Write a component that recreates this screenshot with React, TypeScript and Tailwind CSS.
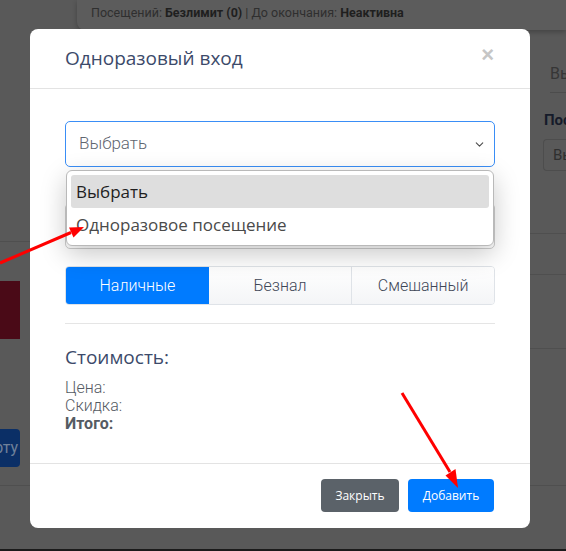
import { ChevronDown } from "lucide-react";

function Backdrop() {
  return (
    <div className="flex h-full flex-col">
      {/* top card of the page behind */}
      <div className="ml-[77px] h-[30px] rounded-bl-[8px] bg-[#5c5c5c] pl-[14px] pt-[4px] font-['Roboto',sans-serif] text-[12.5px] text-[#2f2f2f] shadow-[0_2px_5px_rgba(0,0,0,0.25)]">
        Посещений: <b className="font-bold text-[#1f1f1f]">Безлимит (0)</b> | До окончания:{" "}
        <b className="font-bold text-[#1f1f1f]">Неактивна</b>
      </div>

      <div className="flex flex-1">
        {/* left strip */}
        <div className="flex w-[30px] flex-col">
          <div className="mt-[211px] h-px bg-[#4f4f4f]" />
          <div className="mt-[39px] h-[58px] w-[20px] bg-[#4a0a17]" />
          <div className="mt-[90px] flex h-[38px] w-[20px] items-center justify-end overflow-hidden rounded-r-[4px] bg-[#0b2f66] pr-[2px] font-['Roboto',sans-serif] text-[16px] text-[#6f8099]">
            рту
          </div>
        </div>

        <div className="flex-1" />

        {/* right strip */}
        <div className="flex w-[36px] flex-col">
          <div className="ml-[20px] mt-[34px] h-[20px] overflow-hidden whitespace-nowrap font-['Roboto',sans-serif] text-[16px] leading-[20px] text-[#363636]">
            Вы
          </div>
          <div className="ml-[20px] mt-[8px] h-px bg-[#4c4c4c]" />
          <div className="ml-[14px] mt-[18px] overflow-hidden whitespace-nowrap font-['Roboto',sans-serif] text-[15px] font-bold leading-[18px] text-[#151b2a]">
            Посещ
          </div>
          <div className="ml-[13px] mt-[10px] flex h-[32px] items-center overflow-hidden whitespace-nowrap rounded-l-[4px] border border-r-0 border-[#4d4d4d] pl-[9px] font-['Roboto',sans-serif] text-[15px] text-[#2f2f2f]">
            Вы
          </div>
          <div className="mt-[62px] h-px bg-[#4f4f4f]" />
          <div className="mt-[40px] h-px bg-[#4f4f4f]" />
          <div className="mt-[73px] h-px bg-[#4f4f4f]" />
        </div>
      </div>

      <div className="h-px bg-[#4f4f4f]" />
      <div className="h-[63px]" />
      <div className="h-[2px] bg-[#1b1b1b]" />
    </div>
  );
}

function Arrows() {
  return (
    <svg
      className="pointer-events-none absolute left-0 top-0"
      width="566"
      height="551"
      viewBox="0 0 566 551"
    >
      <line x1="0" y1="263" x2="71" y2="232.5" stroke="#ff0000" strokeWidth="3" />
      <polygon points="84,227 73.5,237.5 69,227.5" fill="#ff0000" />
      <line x1="402" y1="393" x2="450" y2="472" stroke="#ff0000" strokeWidth="3" />
      <polygon points="458,488 445.5,475.5 455.5,469" fill="#ff0000" />
    </svg>
  );
}

export default function App() {
  return (
    <div className="relative h-[551px] w-[566px] overflow-hidden bg-[#595959]">
      <Backdrop />

      {/* modal */}
      <div className="absolute left-[30px] top-[29px] w-[500px] rounded-[8px] bg-white">
        <div className="flex h-[60px] items-center justify-between border-b border-[#e3e3e3] pl-[35px] pr-[36px]">
          <h5 className="font-['Open_Sans',sans-serif] text-[19px] text-[#3c4a6a]">Одноразовый вход</h5>
          <span className="-mt-[8px] font-['Liberation_Sans',sans-serif] text-[22px] font-bold leading-none text-[#c6c6c6]">
            ×
          </span>
        </div>

        <div className="px-[35px] pb-[30px] pt-[32px]">
          <div className="relative">
            <div className="flex h-[46px] items-center justify-between rounded-[5px] border border-[#3a8ef6] pl-[13px] pr-[8px] font-['Roboto',sans-serif] text-[17px] font-light text-[#5f6670]">
              Выбрать
              <ChevronDown size={13} strokeWidth={2} className="text-[#4d4d4d]" />
            </div>

            {/* field hidden under the open list */}
            <div className="mt-[36px] h-[46px] rounded-[5px] border border-[#cfcfcf]" />

            {/* open list */}
            <div className="absolute left-[1px] right-[1px] top-[49px] rounded-[6px] border border-[#b9b9b9] bg-white p-[4px] font-['Open_Sans',sans-serif] text-[17px] shadow-[0_8px_26px_rgba(0,0,0,0.22)]">
              <div className="flex h-[33px] items-center rounded-[3px] bg-[#dedede] px-[5px] text-[#1f1f1f]">
                Выбрать
              </div>
              <div className="flex h-[33px] items-center px-[5px] text-[#4a4a4a]">Одноразовое посещение</div>
            </div>
          </div>

          <div className="mt-[17px] grid h-[39px] grid-cols-3 overflow-hidden rounded-[4px] border border-[#dfe3e8] font-['Roboto',sans-serif] text-[16px] font-light">
            <div className="flex items-center justify-center bg-[#007bff] text-white">Наличные</div>
            <div className="flex items-center justify-center bg-gradient-to-b from-white to-[#f4f5f7] text-[#3f4757]">
              Безнал
            </div>
            <div className="flex items-center justify-center border-l border-[#dfe3e8] bg-gradient-to-b from-white to-[#f4f5f7] text-[#3f4757]">
              Смешанный
            </div>
          </div>

          <div className="mt-[18px] h-px bg-[#e5e5e5]" />

          <div className="mt-[23px] font-['Open_Sans',sans-serif] text-[19px] leading-[20px] text-[#3c4a6a]">Стоимость:</div>

          <div className="mt-[12px] font-['Roboto',sans-serif] text-[16px] leading-[18px] text-[#555b63]">
            <div className="font-light">Цена:</div>
            <div className="font-light">Скидка:</div>
            <div className="font-bold">Итого:</div>
          </div>
        </div>

        <div className="flex justify-end gap-[9px] border-t border-[#e3e3e3] pb-[16px] pr-[36px] pt-[15px]">
          <button className="h-[33px] w-[78px] rounded-[4px] bg-[#5b6269] font-['Open_Sans',sans-serif] text-[12px] text-white">
            Закрыть
          </button>
          <button className="h-[33px] w-[86px] rounded-[4px] bg-[#007bff] font-['Open_Sans',sans-serif] text-[12px] text-white">
            Добавить
          </button>
        </div>
      </div>

      <Arrows />
    </div>
  );
}
